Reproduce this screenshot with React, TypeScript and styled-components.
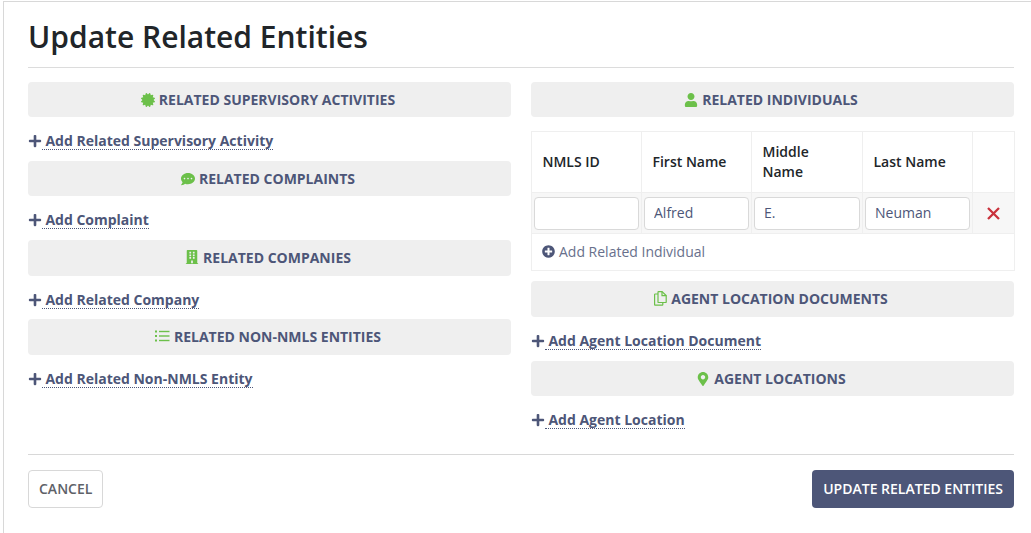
import { createGlobalStyle, styled } from 'styled-components';
import { FaBuilding, FaCertificate, FaCommentDots, FaMapMarkerAlt, FaPlus, FaPlusCircle, FaUser } from 'react-icons/fa';
import type { ReactNode } from 'react';

const GlobalStyle = createGlobalStyle`
  html, body {
    margin: 0;
    padding: 0;
    background: #fff;
  }
  body {
    font-family: "Open Sans", sans-serif;
    font-size: 14px;
    color: #212529;
  }
`;

const Modal = styled.div`
  box-sizing: border-box;
  width: 1028px;
  height: 532px;
  margin: 1px 0 0 3px;
  border-top: 1px solid #d8d8d8;
  border-left: 1px solid #d8d8d8;
  padding: 0 17px 0 24px;
`;

const Title = styled.h1`
  margin: 0;
  height: 65px;
  border-bottom: 1px solid #dcdcdc;
  font-size: 30px;
  font-weight: 600;
  line-height: 70px;
  color: #212529;
`;

const Columns = styled.div`
  display: grid;
  grid-template-columns: 483px 483px;
  column-gap: 20px;
  height: 387px;
  padding-top: 14px;
  box-sizing: border-box;
  border-bottom: 1px solid #d8d8d8;
`;

const Column = styled.div`
  display: flex;
  flex-direction: column;
`;

const Bar = styled.div<{ $tall?: boolean }>`
  display: flex;
  align-items: center;
  justify-content: center;
  gap: 4px;
  box-sizing: border-box;
  height: ${(p) => (p.$tall ? 36 : 35)}px;
  padding: 0 3px ${(p) => (p.$tall ? 2 : 0)}px 0;
  flex-shrink: 0;
  border-radius: 4px;
  background: #efefef;
  color: #4d5678;
  font-size: 14px;
  font-weight: 700;
  text-transform: uppercase;

  svg {
    color: #6cc04a;
    font-size: 14px;
  }
`;

const AddRow = styled.div<{ $short?: boolean }>`
  display: flex;
  align-items: center;
  box-sizing: border-box;
  height: ${(p) => (p.$short ? 43 : 44)}px;
  padding-top: 4px;
  flex-shrink: 0;
  color: #4d5678;
  font-size: 14px;
  font-weight: 700;

  svg {
    font-size: 14px;
  }
`;

const AddLink = styled.a`
  padding: 0 0 0 3.4px;
  border-bottom: 1px dotted #4d5678;
  line-height: 17px;
`;

const Table = styled.table`
  width: 483px;
  margin: 14px 0 10px;
  border-collapse: collapse;
  table-layout: fixed;
  flex-shrink: 0;
`;

const HeadCell = styled.th`
  height: 60px;
  padding: 0 10px 0 10.5px;
  border: 1px solid #efefef;
  font-size: 14px;
  font-weight: 600;
  line-height: 20px;
  text-align: left;
  color: #212529;
`;

const InputCell = styled.td`
  height: 40px;
  padding: 0 2px;
  border: 1px solid #efefef;
  background: #f7f7f7;
`;

const RemoveCell = styled(InputCell)`
  svg {
    display: block;
    margin: 0 auto;
  }
`;

const TextInput = styled.input`
  display: block;
  box-sizing: border-box;
  width: 100%;
  height: 33px;
  padding: 0 9px 2px;
  border: 1px solid #d9d9d9;
  border-radius: 4px;
  background: #fff;
  font-family: "Open Sans", sans-serif;
  font-size: 14px;
  color: #4d5678;
`;

const FootCell = styled.td`
  height: 34px;
  padding: 0 10px 2px;
  border: 1px solid #efefef;
  color: #68708c;
  font-size: 14px;

  svg {
    color: #4d5678;
    font-size: 13px;
    margin-right: 4px;
    vertical-align: -1.5px;
  }
`;

const Footer = styled.div`
  display: flex;
  justify-content: space-between;
  align-items: flex-start;
  padding-top: 15px;
`;

const CancelButton = styled.button`
  height: 38px;
  padding: 0 10px 2px;
  border: 1px solid #d8d8d8;
  border-radius: 4px;
  background: #fff;
  color: #5e6268;
  font-family: "Open Sans", sans-serif;
  font-size: 14px;
  font-weight: 600;
`;

const SubmitButton = styled.button`
  height: 38px;
  padding: 0 11px 2px;
  border: 0;
  border-radius: 4px;
  background: #4d5678;
  color: #fff;
  font-family: "Open Sans", sans-serif;
  font-size: 14px;
  font-weight: 600;
`;

const ListIcon = () => (
  <svg width="15" height="14" viewBox="0 0 15 14" fill="currentColor">
    <rect x="0" y="1.5" width="2" height="2" />
    <rect x="0" y="6" width="2" height="2" />
    <rect x="0" y="10.5" width="2" height="2" />
    <rect x="4" y="1.8" width="10.5" height="1.4" />
    <rect x="4" y="6.3" width="10.5" height="1.4" />
    <rect x="4" y="10.8" width="10.5" height="1.4" />
  </svg>
);

const CopyIcon = () => (
  <svg width="13" height="15" viewBox="0 0 13 15" fill="none" stroke="currentColor" strokeWidth="1.2">
    <path d="M4 3H1.2a.6.6 0 0 0-.6.6v10a.6.6 0 0 0 .6.6h7a.6.6 0 0 0 .6-.6V11.5" />
    <path d="M8 .6H4.6a.6.6 0 0 0-.6.6v9.7a.6.6 0 0 0 .6.6h7a.6.6 0 0 0 .6-.6V4.6L8 .6Z" />
    <path d="M8 .6v4h4.2" />
  </svg>
);

const RemoveIcon = () => (
  <svg width="13" height="13" viewBox="0 0 13 13" stroke="#c9323c" strokeWidth="2.3">
    <path d="M1 1l11 11M12 1 1 12" />
  </svg>
);

const Section = ({ icon, title, tall }: { icon: ReactNode; title: string; tall?: boolean }) => (
  <Bar $tall={tall}>
    {icon}
    {title}
  </Bar>
);

const Add = ({ label, short }: { label: string; short?: boolean }) => (
  <AddRow $short={short}>
    <FaPlus />
    <AddLink>{label}</AddLink>
  </AddRow>
);

export default function App() {
  return (
    <>
      <GlobalStyle />
      <Modal>
        <Title>Update Related Entities</Title>
        <Columns>
          <Column>
            <Section icon={<FaCertificate />} title="Related Supervisory Activities" />
            <Add label="Add Related Supervisory Activity" />
            <Section icon={<FaCommentDots />} title="Related Complaints" />
            <Add label="Add Complaint" />
            <Section icon={<FaBuilding />} title="Related Companies" tall />
            <Add label="Add Related Company" short />
            <Section icon={<ListIcon />} title="Related Non-NMLS Entities" tall />
            <Add label="Add Related Non-NMLS Entity" />
          </Column>
          <Column>
            <Section icon={<FaUser />} title="Related Individuals" />
            <Table>
              <colgroup>
                <col style={{ width: 110 }} />
                <col style={{ width: 110 }} />
                <col style={{ width: 111 }} />
                <col style={{ width: 110 }} />
                <col style={{ width: 42 }} />
              </colgroup>
              <thead>
                <tr>
                  <HeadCell>NMLS ID</HeadCell>
                  <HeadCell>First Name</HeadCell>
                  <HeadCell>
                    Middle
                    <br />
                    Name
                  </HeadCell>
                  <HeadCell>Last Name</HeadCell>
                  <HeadCell />
                </tr>
              </thead>
              <tbody>
                <tr>
                  <InputCell>
                    <TextInput defaultValue="" />
                  </InputCell>
                  <InputCell>
                    <TextInput defaultValue="Alfred" />
                  </InputCell>
                  <InputCell>
                    <TextInput defaultValue="E." />
                  </InputCell>
                  <InputCell>
                    <TextInput defaultValue="Neuman" />
                  </InputCell>
                  <RemoveCell>
                    <RemoveIcon />
                  </RemoveCell>
                </tr>
                <tr>
                  <FootCell colSpan={5}>
                    <FaPlusCircle />
                    Add Related Individual
                  </FootCell>
                </tr>
              </tbody>
            </Table>
            <Section icon={<CopyIcon />} title="Agent Location Documents" tall />
            <Add label="Add Agent Location Document" />
            <Section icon={<FaMapMarkerAlt />} title="Agent Locations" />
            <Add label="Add Agent Location" />
          </Column>
        </Columns>
        <Footer>
          <CancelButton>CANCEL</CancelButton>
          <SubmitButton>UPDATE RELATED ENTITIES</SubmitButton>
        </Footer>
      </Modal>
    </>
  );
}
